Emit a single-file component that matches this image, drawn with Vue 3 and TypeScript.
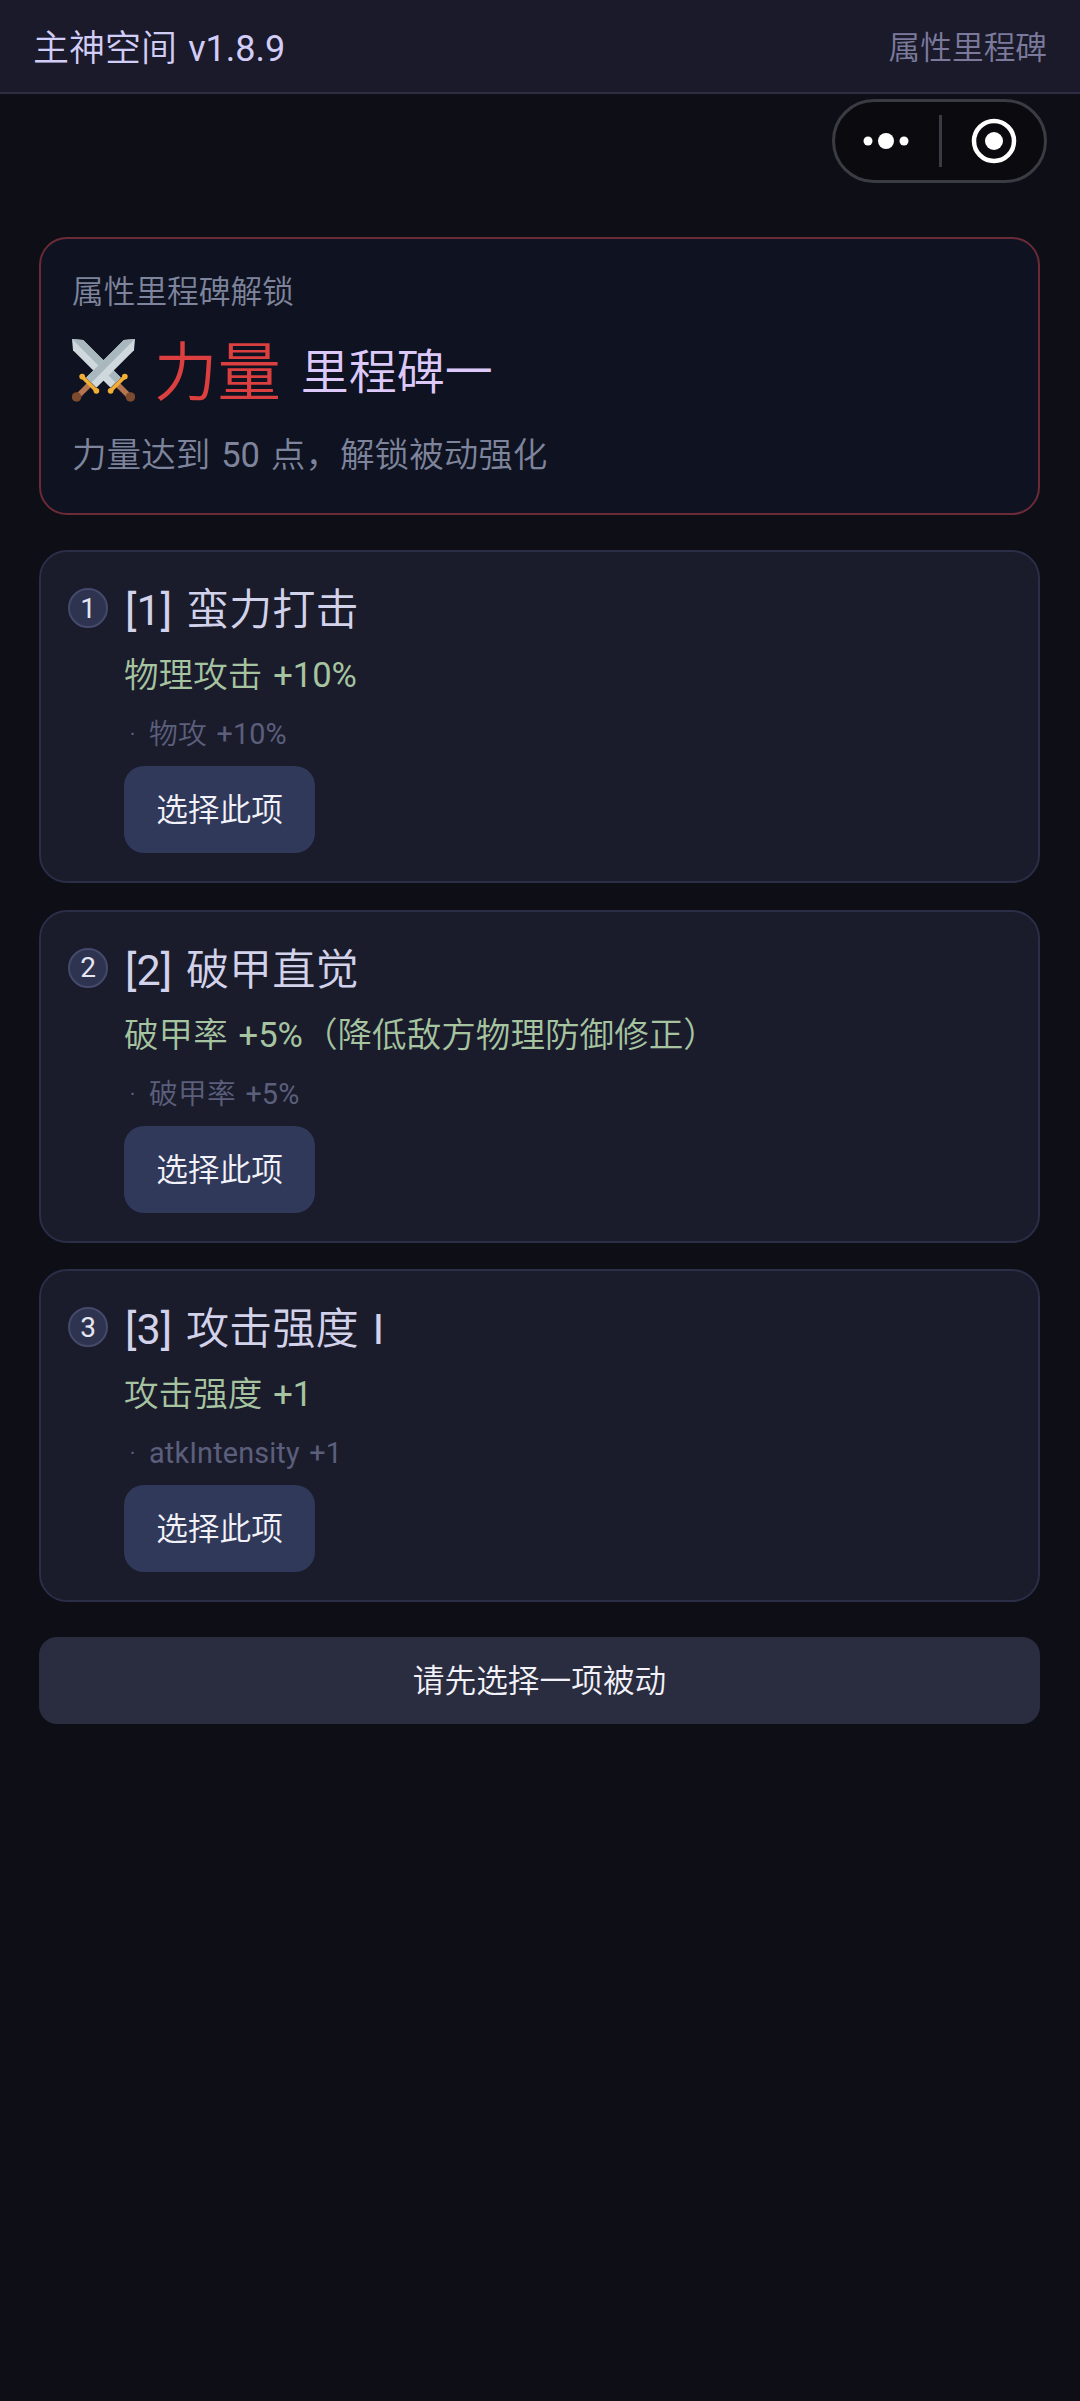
<script setup lang="ts">
interface Option {
  index: number
  title: string
  effect: string
  detail: string
}

interface Segment {
  text: string
  latin: boolean
}

const options: Option[] = [
  { index: 1, title: '[1] 蛮力打击', effect: '物理攻击 +10%', detail: '物攻 +10%' },
  { index: 2, title: '[2] 破甲直觉', effect: '破甲率 +5%（降低敌方物理防御修正）', detail: '破甲率 +5%' },
  { index: 3, title: '[3] 攻击强度 I', effect: '攻击强度 +1', detail: 'atkIntensity +1' },
]

// Latin runs sit one weight above the CJK runs, as in the reference font.
function segments(text: string): Segment[] {
  const runs = text.match(/[\x20-\x7e]+|[^\x20-\x7e]+/g) ?? []
  return runs.map((run) => ({ text: run, latin: /^[\x20-\x7e]/.test(run) }))
}
</script>

<template>
  <div class="page">
    <header class="topbar">
      <span class="app-name">主神空间<span class="latin"> v1.8.9</span></span>
      <span class="page-name">属性里程碑</span>
    </header>

    <div class="capsule">
      <svg class="capsule-dots" viewBox="0 0 46 16" width="46" height="16" aria-hidden="true">
        <circle cx="5" cy="8" r="4.5" fill="#fff" />
        <circle cx="23" cy="8" r="8" fill="#fff" />
        <circle cx="41" cy="8" r="4.5" fill="#fff" />
      </svg>
      <span class="capsule-line"></span>
      <svg class="capsule-ring" viewBox="0 0 46 46" width="46" height="46" aria-hidden="true">
        <circle cx="23" cy="23" r="20" fill="none" stroke="#fff" stroke-width="4.5" />
        <circle cx="23" cy="23" r="9" fill="#fff" />
      </svg>
    </div>

    <main class="content">
      <section class="hero">
        <div class="hero-label">属性里程碑解锁</div>
        <div class="hero-title">
          <svg class="swords" viewBox="0 0 62 62" width="63" height="63" aria-hidden="true">
            <defs>
              <g id="sword">
                <polygon points="0,0 11,1 48,38 38,48 1,11" fill="#cfd8dc" />
                <polygon points="0,0 11,1 48,38 43,43" fill="#a9b8bf" />
                <line x1="44" y1="44" x2="55" y2="55" stroke="#b5754f" stroke-width="5.5" />
                <circle cx="57.5" cy="57" r="4.7" fill="#7b4a2f" />
                <line x1="38" y1="51" x2="52" y2="37" stroke="#f2ae35" stroke-width="3.6" stroke-linecap="round" />
                <circle cx="38" cy="51" r="2.8" fill="#f2ae35" />
                <circle cx="52" cy="37" r="2.8" fill="#f2ae35" />
              </g>
            </defs>
            <use href="#sword" />
            <use href="#sword" transform="translate(62 0) scale(-1 1)" />
          </svg>
          <span class="attr-name">力量</span>
          <span class="milestone-name">里程碑一</span>
        </div>
        <div class="hero-desc">
          <span v-for="(seg, i) in segments('力量达到 50 点，解锁被动强化')" :key="i" :class="{ latin: seg.latin }">{{ seg.text }}</span>
        </div>
      </section>

      <section v-for="opt in options" :key="opt.index" class="card">
        <div class="card-head">
          <span class="badge latin">{{ opt.index }}</span>
          <span class="card-title">
            <span v-for="(seg, i) in segments(opt.title)" :key="i" :class="{ latin: seg.latin }">{{ seg.text }}</span>
          </span>
        </div>
        <div class="card-body">
          <div class="effect">
            <span v-for="(seg, i) in segments(opt.effect)" :key="i" :class="{ latin: seg.latin }">{{ seg.text }}</span>
          </div>
          <div class="detail">
            <span class="detail-dot">·</span>
            <span v-for="(seg, i) in segments(opt.detail)" :key="i" :class="{ latin: seg.latin }">{{ seg.text }}</span>
          </div>
          <button class="pick" type="button">选择此项</button>
        </div>
      </section>

      <button class="confirm" type="button">请先选择一项被动</button>
    </main>
  </div>
</template>

<style>
html,
body {
  margin: 0;
  background: #0e0e17;
}
</style>

<style scoped>
.page {
  position: relative;
  min-height: 2401px;
  background: #0e0e17;
  font-family: Roboto, "Noto Sans CJK SC", "Noto Sans", sans-serif;
  font-weight: 350;
  word-spacing: 0.14em;
  box-sizing: border-box;
}

.latin {
  font-weight: 400;
}

.topbar {
  height: 94px;
  box-sizing: border-box;
  padding: 0 33px 2px;
  display: flex;
  align-items: center;
  justify-content: space-between;
  background: #1a1a2a;
  border-bottom: 2px solid #2d2d42;
}

.app-name {
  font-size: 36px;
  white-space: pre;
  color: #d2cdf6;
}

.page-name {
  font-size: 31.7px;
  color: #7c7a9c;
}

.capsule {
  position: absolute;
  top: 99px;
  right: 33px;
  width: 215px;
  height: 84px;
  box-sizing: border-box;
  border: 3px solid #3b3b43;
  border-radius: 42px;
  background: #0a0a0f;
}

.capsule-dots {
  position: absolute;
  left: 28px;
  top: 31px;
}

.capsule-line {
  position: absolute;
  left: 104px;
  top: 13px;
  width: 3px;
  height: 52px;
  background: #3b3b43;
}

.capsule-ring {
  position: absolute;
  left: 136px;
  top: 16px;
}

.content {
  padding: 143px 40px 0 39px;
  display: flex;
  flex-direction: column;
}

.hero {
  height: 278px;
  box-sizing: border-box;
  padding: 34px 31px 0;
  border: 2px solid #6a2a38;
  border-radius: 28px;
  background: #0f1220;
}

.hero-label {
  height: 40px;
  line-height: 40px;
  font-size: 31.7px;
  color: #7d849c;
}

.hero-title {
  margin-top: 20px;
  height: 80px;
  display: flex;
  align-items: center;
}

.swords {
  flex: none;
  margin-top: -6px;
}

.attr-name {
  margin-left: 19px;
  font-size: 63.4px;
  line-height: 80px;
  color: #dc3f3f;
}

.milestone-name {
  margin-left: 20px;
  font-size: 48px;
  line-height: 80px;
  color: #dcc9fa;
}

.hero-desc {
  margin-top: 20px;
  height: 44px;
  line-height: 44px;
  font-size: 34.6px;
  white-space: pre;
  color: #7d849c;
}

.card {
  margin-top: 26.5px;
  height: 333px;
  box-sizing: border-box;
  padding: 26px 27px 0;
  border: 2px solid #2a2e46;
  border-radius: 28px;
  background: #1a1c2c;
}

.hero + .card {
  margin-top: 35px;
}

.card-head {
  height: 60px;
  display: flex;
  align-items: center;
}

.badge {
  flex: none;
  width: 40px;
  height: 40px;
  box-sizing: border-box;
  border: 2px solid #45496a;
  border-radius: 50%;
  background: #2e3350;
  display: flex;
  align-items: center;
  justify-content: center;
  font-size: 28px;
  color: #e6e6f2;
}

.card-title {
  align-self: flex-start;
  margin-left: 17px;
  padding-top: 3px;
  font-size: 43.2px;
  line-height: 60px;
  white-space: pre;
  word-spacing: 0.07em;
  color: #d2d2ea;
}

.card-body {
  margin-left: 56px;
}

.effect {
  margin-top: 11px;
  height: 52px;
  line-height: 52px;
  font-size: 34.6px;
  white-space: pre;
  color: #a6c4a0;
}

.detail {
  margin-top: 13px;
  height: 40px;
  line-height: 40px;
  font-size: 28.8px;
  letter-spacing: 0.15px;
  color: #5b5f7b;
}

.detail-dot {
  display: inline-block;
  width: 17px;
  margin-right: 8px;
  text-align: center;
}

.detail span {
  white-space: pre;
}

.pick {
  display: block;
  margin-top: 12px;
  width: 191px;
  height: 87px;
  padding: 0 0 5px;
  border: none;
  border-radius: 20px;
  background: #30395a;
  font: inherit;
  font-size: 31.7px;
  color: #f2f2f8;
}

.confirm {
  margin-top: 35px;
  height: 87px;
  padding: 0 0 5px;
  border: none;
  border-radius: 18px;
  background: #2a2c40;
  font: inherit;
  font-size: 31.7px;
  color: #f2f2f8;
}
</style>
